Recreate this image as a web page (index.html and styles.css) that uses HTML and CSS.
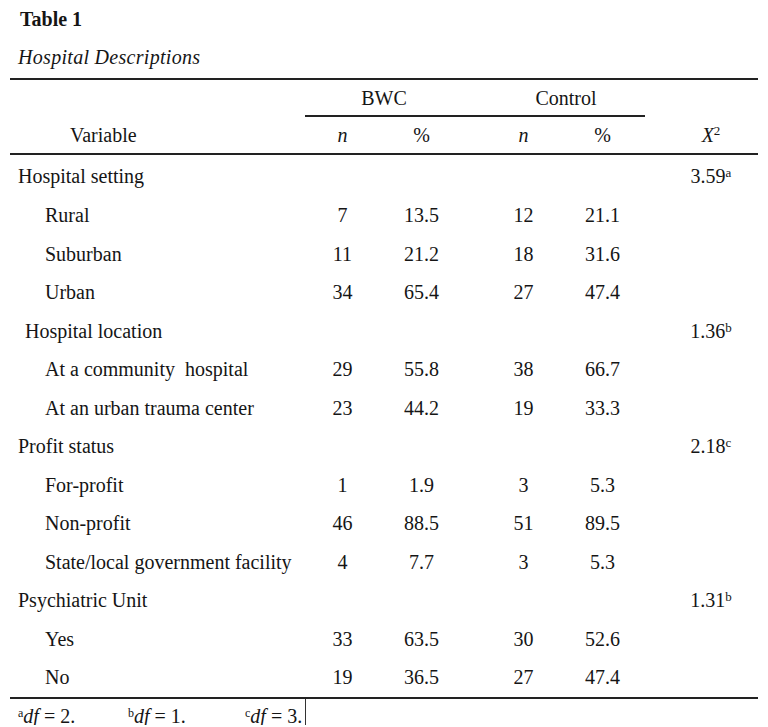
FILE: index.html
```html
<!DOCTYPE html>
<html lang="en">
<head>
<meta charset="utf-8">
<title>Table 1 Hospital Descriptions</title>
<link rel="stylesheet" href="styles.css">
</head>
<body>
<div class="page">
  <div class="title">Table 1</div>
  <div class="subtitle">Hospital Descriptions</div>
  <table class="tbl">
    <colgroup>
      <col class="c-var"><col class="c-n"><col class="c-p"><col class="c-gap"><col class="c-n2"><col class="c-p2"><col class="c-gap"><col class="c-x">
    </colgroup>
    <thead>
      <tr class="h1">
        <th></th>
        <th colspan="2" class="grp">BWC</th>
        <th class="grp"></th>
        <th colspan="2" class="grp">Control</th>
        <th></th>
        <th></th>
      </tr>
      <tr class="h2">
        <th class="varhead">Variable</th>
        <th class="num"><i>n</i></th>
        <th class="num">%</th>
        <th></th>
        <th class="num"><i>n</i></th>
        <th class="num">%</th>
        <th></th>
        <th class="num"><i>X</i><sup class="sq">2</sup></th>
      </tr>
    </thead>
    <tbody>
      <tr class="first"><td class="cat">Hospital setting</td><td></td><td></td><td></td><td></td><td></td><td></td><td class="num">3.59<sup>a</sup></td></tr>
      <tr><td class="sub">Rural</td><td class="num">7</td><td class="num">13.5</td><td></td><td class="num">12</td><td class="num">21.1</td><td></td><td></td></tr>
      <tr><td class="sub">Suburban</td><td class="num">11</td><td class="num">21.2</td><td></td><td class="num">18</td><td class="num">31.6</td><td></td><td></td></tr>
      <tr><td class="sub">Urban</td><td class="num">34</td><td class="num">65.4</td><td></td><td class="num">27</td><td class="num">47.4</td><td></td><td></td></tr>
      <tr><td class="cat cat-in">Hospital location</td><td></td><td></td><td></td><td></td><td></td><td></td><td class="num">1.36<sup>b</sup></td></tr>
      <tr><td class="sub">At a community&nbsp; hospital</td><td class="num">29</td><td class="num">55.8</td><td></td><td class="num">38</td><td class="num">66.7</td><td></td><td></td></tr>
      <tr><td class="sub">At an urban trauma center</td><td class="num">23</td><td class="num">44.2</td><td></td><td class="num">19</td><td class="num">33.3</td><td></td><td></td></tr>
      <tr><td class="cat">Profit status</td><td></td><td></td><td></td><td></td><td></td><td></td><td class="num">2.18<sup>c</sup></td></tr>
      <tr><td class="sub">For-profit</td><td class="num">1</td><td class="num">1.9</td><td></td><td class="num">3</td><td class="num">5.3</td><td></td><td></td></tr>
      <tr><td class="sub">Non-profit</td><td class="num">46</td><td class="num">88.5</td><td></td><td class="num">51</td><td class="num">89.5</td><td></td><td></td></tr>
      <tr><td class="sub">State/local government facility</td><td class="num">4</td><td class="num">7.7</td><td></td><td class="num">3</td><td class="num">5.3</td><td></td><td></td></tr>
      <tr><td class="cat">Psychiatric Unit</td><td></td><td></td><td></td><td></td><td></td><td></td><td class="num">1.31<sup>b</sup></td></tr>
      <tr><td class="sub">Yes</td><td class="num">33</td><td class="num">63.5</td><td></td><td class="num">30</td><td class="num">52.6</td><td></td><td></td></tr>
      <tr class="last"><td class="sub">No</td><td class="num">19</td><td class="num">36.5</td><td></td><td class="num">27</td><td class="num">47.4</td><td></td><td></td></tr>
    </tbody>
  </table>
  <div class="notes">
    <span class="note note-a"><sup>a</sup><i>df</i> = 2.</span>
    <span class="note note-b"><sup>b</sup><i>df</i> = 1.</span>
    <span class="note note-c"><sup>c</sup><i>df</i> = 3.</span>
    <span class="bar"></span>
  </div>
</div>
</body>
</html>
```

FILE: styles.css
```css
html, body {
  margin: 0;
  padding: 0;
  background: #ffffff;
}

body {
  font-family: "Liberation Serif", "Times New Roman", serif;
  font-size: 20px;
  color: #151515;
}

.page {
  padding: 7px 0 0 10px;
  width: 748px;
}

.title {
  font-weight: bold;
  line-height: 24px;
  height: 24px;
  padding-left: 10px;
}

.subtitle {
  font-style: italic;
  line-height: 24px;
  height: 24px;
  margin-top: 14px;
  padding-left: 8px;
  letter-spacing: 0.3px;
}

.tbl {
  margin-top: 9px;
  width: 748px;
  border-collapse: separate;
  border-spacing: 0;
  table-layout: fixed;
}

.c-var { width: 295px; }
.c-n { width: 80px; }
.c-p { width: 78px; }
.c-gap { width: 24px; }
.c-n2 { width: 78px; }
.c-p2 { width: 80px; }
.c-x { width: 89px; }

.tbl th,
.tbl td {
  padding: 0;
  font-weight: normal;
  line-height: 24px;
  white-space: nowrap;
  vertical-align: middle;
}

.h1 th {
  border-top: 2px solid #222222;
  height: 37px;
}

.h1 th.grp {
  border-bottom: 2px solid #222222;
  height: 35px;
  text-align: center;
}

.h2 th {
  height: 36px;
  border-bottom: 2px solid #222222;
}

.varhead {
  text-align: left;
  padding-left: 60px !important;
}

.num {
  text-align: center;
  padding-right: 5px !important;
}

.tbl tbody td {
  height: 38.5px;
}

.tbl tr.first td {
  height: 40px;
  padding-top: 1px;
}

.tbl tr.last td {
  border-bottom: 2px solid #222222;
  height: 38.5px;
}

.cat {
  padding-left: 8px !important;
}

.cat-in {
  padding-left: 15px !important;
}

.sub {
  padding-left: 35px !important;
}

sup {
  font-size: 13px;
  vertical-align: 6px;
  line-height: 0;
}

.sq {
  font-size: 13px;
  vertical-align: 7px;
}

.notes {
  display: flex;
  align-items: flex-start;
  padding-left: 8px;
  height: 26px;
  line-height: 18px;
}

.note {
  padding-top: 8px;
}

.note sup {
  font-size: 12px;
  vertical-align: 6px;
}

.note-a { width: 110px; }
.note-b { width: 117px; }
.note-c { width: 60px; }

.bar {
  width: 1px;
  height: 26px;
  background: #333333;
}
```
